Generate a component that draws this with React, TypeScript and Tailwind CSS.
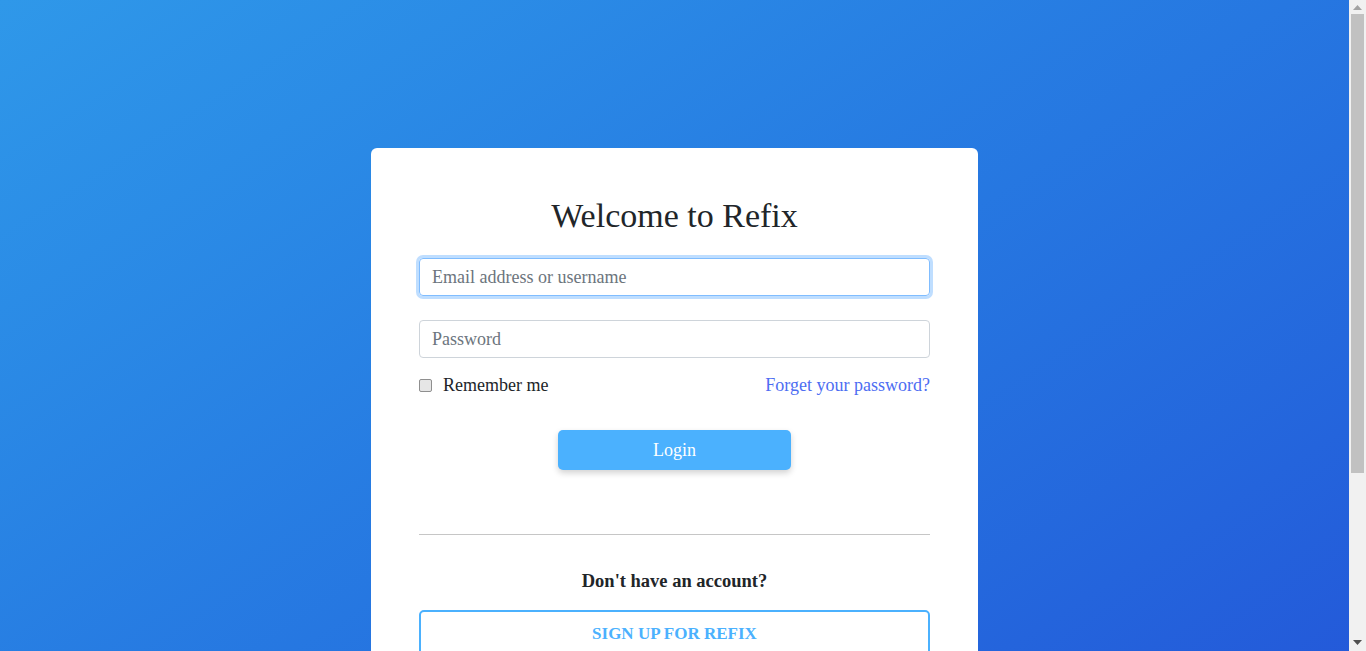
const serif = "font-['Liberation_Serif','DejaVu_Serif',serif]"

const ScrollBar = () => (
    <div className="w-[17px] shrink-0 bg-[#f1f1f1] flex flex-col items-center">
        <div className="h-[14px] flex items-center justify-center">
            <svg width="9" height="5" viewBox="0 0 9 5">
                <polygon points="0,5 4.5,0 9,5" fill="#a3a3a3" />
            </svg>
        </div>
        <div className="w-[13px] h-[459px] bg-[#c1c1c1]" />
        <div className="flex-1" />
        <div className="h-[17px] flex items-center justify-center">
            <svg width="9" height="5" viewBox="0 0 9 5">
                <polygon points="0,0 9,0 4.5,5" fill="#505050" />
            </svg>
        </div>
    </div>
)

export default function App() {
    return (
        <div className={`h-screen flex overflow-hidden ${serif}`}>
            <main className="flex-1 overflow-hidden">
                <div className="bg-linear-to-br from-[#2f98e9] to-[#2450d7] pt-[148px] pb-[169px]">
                    <div className="mx-auto w-[607px] bg-white rounded-md px-12 pt-[47px] pb-12">
                        <h1 className="text-center text-[34px] leading-[42px] text-[#212529] mb-[21px]">Welcome to Refix</h1>
                        <input
                            type="text"
                            placeholder="Email address or username"
                            className="block w-full h-[38px] px-3 text-[18px] text-[#495057] placeholder:text-[#6c757d] border border-[#80bdff] rounded-[4px] shadow-[0_0_0_3px_rgba(0,123,255,0.25)] outline-none"
                        />
                        <input
                            type="password"
                            placeholder="Password"
                            className="block w-full h-[38px] mt-6 px-3 text-[18px] text-[#495057] placeholder:text-[#6c757d] border border-[#ced4da] rounded-[4px] outline-none"
                        />
                        <div className="flex items-center justify-between mt-[17px] h-[20px]">
                            <label className="flex items-center text-[18px] text-[#212529]">
                                <span className="w-[13px] h-[13px] mr-[11px] rounded-[2px] border border-[#8f8f8f] bg-[#e6e6e6]" />
                                Remember me
                            </label>
                            <a href="#" className="text-[18px] text-[#4d6df2]">Forget your password?</a>
                        </div>
                        <div className="flex justify-center mt-[35px]">
                            <button
                                type="button"
                                className="w-[233px] h-[40px] rounded-[5px] bg-[#4bb1fe] text-white text-[18px] shadow-[0_3px_6px_rgba(0,0,0,0.18)]"
                            >
                                Login
                            </button>
                        </div>
                        <hr className="mt-[64px] border-t border-[#c6c6c6]" />
                        <p className="text-center font-bold text-[18.5px] text-[#212529] mt-[33px]">Don't have an account?</p>
                        <button
                            type="button"
                            className="block w-full h-[48px] mt-[14px] rounded-[5px] border-2 border-[#4bb1fe] text-[#4bb1fe] text-[17px] font-bold"
                        >
                            SIGN UP FOR REFIX
                        </button>
                    </div>
                </div>
            </main>
            <ScrollBar />
        </div>
    )
}
